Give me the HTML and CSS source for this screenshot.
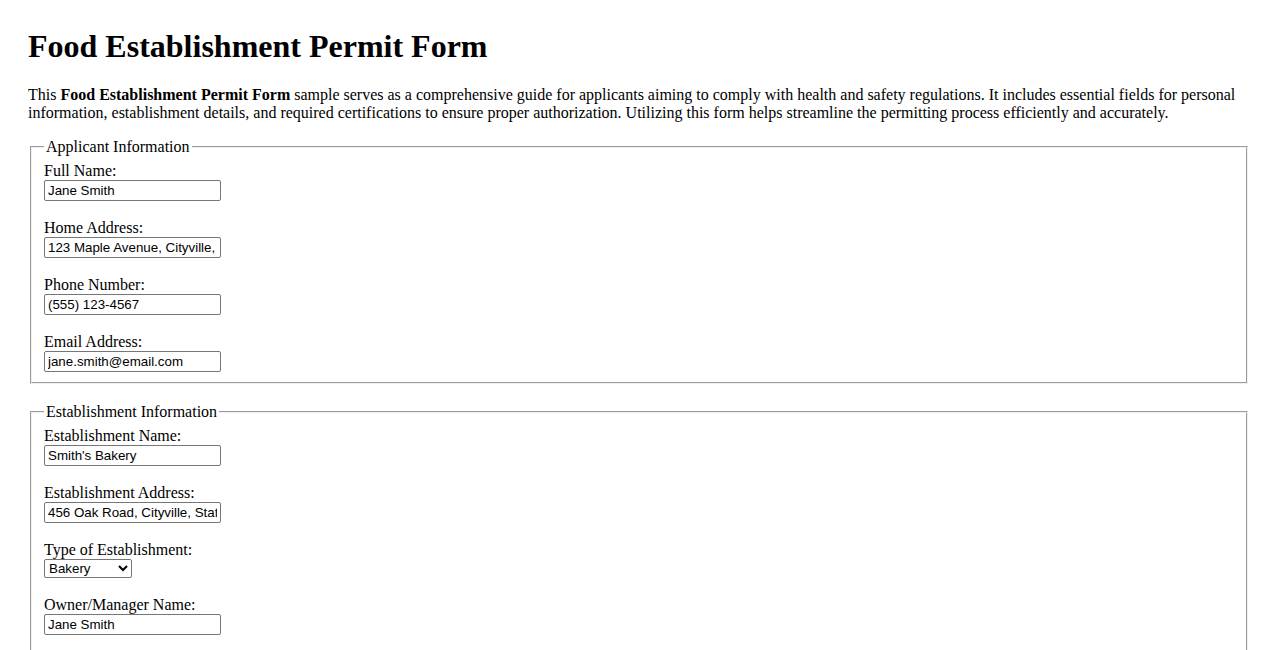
FILE: index.html
```html
<!DOCTYPE html>
<html>
<head>
    <meta charset="utf-8">
    <title>Food Establishment Permit Form</title>
    <link rel="stylesheet" href="styles.css">
</head>
<body>
    <h1>Food Establishment Permit Form</h1>
    <p>This <strong>Food Establishment Permit Form</strong> sample serves as a comprehensive guide for applicants aiming to comply with health and safety regulations. It includes essential fields for personal information, establishment details, and required certifications to ensure proper authorization. Utilizing this form helps streamline the permitting process efficiently and accurately.</p>

    <form>
        <fieldset>
            <legend>Applicant Information</legend>
            <div class="field">
                <label for="fullName">Full Name:</label>
                <input type="text" id="fullName" value="Jane Smith">
            </div>
            <div class="field">
                <label for="homeAddress">Home Address:</label>
                <input type="text" id="homeAddress" value="123 Maple Avenue, Cityville, State 12345">
            </div>
            <div class="field">
                <label for="phone">Phone Number:</label>
                <input type="text" id="phone" value="(555) 123-4567">
            </div>
            <div class="field">
                <label for="email">Email Address:</label>
                <input type="text" id="email" value="jane.smith@email.com">
            </div>
        </fieldset>

        <fieldset>
            <legend>Establishment Information</legend>
            <div class="field">
                <label for="estName">Establishment Name:</label>
                <input type="text" id="estName" value="Smith's Bakery">
            </div>
            <div class="field">
                <label for="estAddress">Establishment Address:</label>
                <input type="text" id="estAddress" value="456 Oak Road, Cityville, State 12345">
            </div>
            <div class="field">
                <label for="estType">Type of Establishment:</label>
                <select id="estType">
                    <option>Restaurant</option>
                    <option selected>Bakery</option>
                    <option>Food Truck</option>
                    <option>Grocery</option>
                </select>
            </div>
            <div class="field">
                <label for="owner">Owner/Manager Name:</label>
                <input type="text" id="owner" value="Jane Smith">
            </div>
            <div class="field">
                <label for="ownerPhone">Owner Phone Number:</label>
                <input type="text" id="ownerPhone" value="(555) 987-6543">
            </div>
        </fieldset>
    </form>
</body>
</html>
```

FILE: styles.css
```css
body {
    margin: 28px;
    font-family: "Liberation Serif", "Times New Roman", serif;
    font-size: 16px;
    color: #000;
    background-color: #fff;
}

h1 {
    font-size: 32px;
    margin: 0 0 21px;
}

p {
    margin: 16px 0;
}

fieldset {
    margin: 0 2px 19px;
    padding: 6px 12px 10px;
    border: 2px groove #f0f0f0;
}

legend {
    padding: 0 2px;
}

.field {
    margin-bottom: 18px;
}

.field:last-child {
    margin-bottom: 0;
}

.field label {
    display: block;
}

.field input {
    display: block;
    box-sizing: border-box;
    width: 177px;
    height: 21px;
    padding: 1px 3px;
    border: 1px solid #767676;
    border-radius: 2px;
    font-family: "Liberation Sans", Arial, sans-serif;
    font-size: 13.33px;
    color: #000;
}

.field select {
    display: block;
    box-sizing: border-box;
    width: 88px;
    height: 19px;
    padding: 0;
    border: 1px solid #767676;
    border-radius: 2px;
    font-family: "Liberation Sans", Arial, sans-serif;
    font-size: 13.33px;
    color: #000;
    background-color: #fff;
}
```
